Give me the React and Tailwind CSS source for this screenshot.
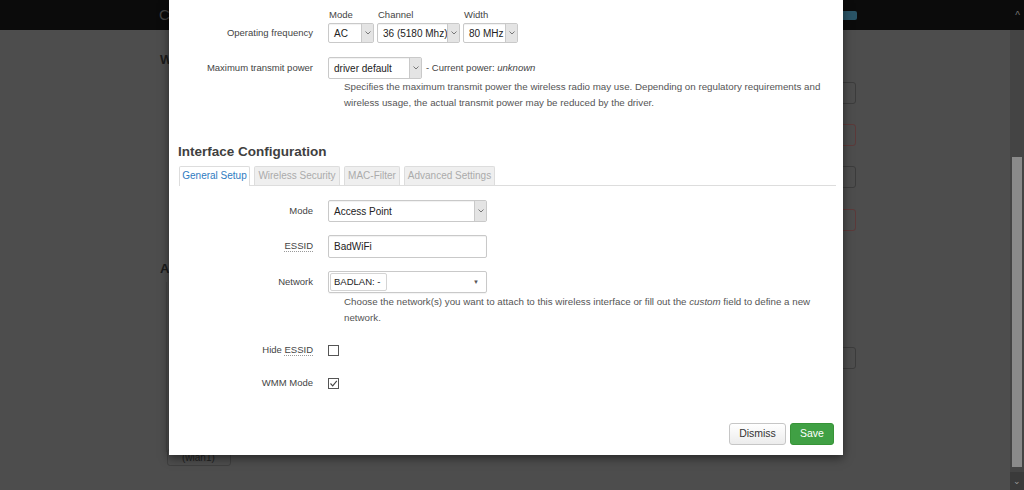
import React from 'react';

const font = "font-['Liberation_Sans',Arial,sans-serif]";

const Chevron = () => (
  <svg width="8" height="6" viewBox="0 0 8 6" fill="none">
    <path d="M1.5 1.5 L4 4 L6.5 1.5" stroke="#777" strokeWidth="1" />
  </svg>
);

// luci-style select: value + grey arrow box on the right
const Select = ({ value, className }) => (
  <div className={`flex border border-[#c9c9c9] rounded-[2px] bg-white shadow-[inset_0_1px_1px_rgba(0,0,0,0.06)] ${className}`}>
    <div className="flex-1 flex items-center pl-[5px] text-[#222] whitespace-nowrap overflow-hidden">{value}</div>
    <div className="w-[12px] flex items-center justify-center bg-[#e4e4e4] border-l border-[#c9c9c9]">
      <Chevron />
    </div>
  </div>
);

const Label = ({ children }) => (
  <div className="w-[144px] mr-[15px] shrink-0 text-right text-[#444]">{children}</div>
);

const Abbr = ({ children }) => (
  <span className="border-b border-dotted border-[#999] leading-[10px] inline-block">{children}</span>
);

const Checkbox = ({ checked }) => (
  <div className="w-[11px] h-[11px] border border-[#555] bg-white flex items-center justify-center">
    {checked && (
      <svg width="9" height="9" viewBox="0 0 9 9" fill="none">
        <path d="M1.5 4.5 L3.7 6.8 L7.8 1.8" stroke="#444" strokeWidth="1.1" />
      </svg>
    )}
  </div>
);

const tabs = [
  { name: 'General Setup', w: 'w-[71px]', active: true },
  { name: 'Wireless Security', w: 'w-[86px]' },
  { name: 'MAC-Filter', w: 'w-[56px]' },
  { name: 'Advanced Settings', w: 'w-[91px]' },
];

export default function App() {
  return (
    <div className={`relative w-[1024px] h-[490px] overflow-hidden bg-[#4d4d4d] text-[9.5px] ${font}`}>
      {/* dimmed page behind the dialog */}
      <div className="h-[30px] bg-[#0b0b0b] flex items-center">
        <span className="ml-[159px] text-[15px] text-[#444]">C</span>
        <span className="ml-[667px] w-[20px] h-[9px] rounded-[2px] bg-[#2a5466]" />
        <span className="ml-auto mr-[4px] text-[10px] text-[#777]">^</span>
      </div>
      <div className="absolute left-[160px] top-[50px] text-[13px] font-bold text-[#1a1a1a]">W</div>
      <div className="absolute left-[160px] top-[259px] text-[13px] font-bold text-[#1a1a1a]">A</div>
      <div className="absolute left-[166px] top-[282px] w-[4px] h-[170px] border-l border-[#454545]" />
      <div className="absolute left-[167px] top-[449px] w-[64px] h-[17px] border border-[#3f3f3f] rounded-[3px] text-[10px] text-[#222] pl-[14px] leading-[15px]">
        (wlan1)
      </div>
      {[82, 124, 166, 209, 347].map((t, i) => (
        <div
          key={t}
          className={`absolute left-[830px] w-[26px] h-[22px] rounded-[3px] border ${i === 1 || i === 3 ? 'border-[#5c3a3a]' : 'border-[#3c3c3c]'}`}
          style={{ top: t }}
        />
      ))}
      {/* scrollbar */}
      <div className="absolute right-0 top-[30px] w-[14px] h-[460px] bg-[#444] flex flex-col items-center">
        <div className="mt-[127px] w-[10px] h-[310px] bg-[#8a8a8a]" />
        <div className="mt-auto h-[18px] w-full bg-[#3a3a3a] text-[9px] text-[#999] text-center leading-[18px]">⌄</div>
      </div>

      {/* dialog */}
      <div className="absolute left-[169px] top-0 w-[674px] h-[455px] bg-white shadow-[0_3px_9px_rgba(0,0,0,0.5)]">
        {/* Operating frequency */}
        <div className="flex items-end mt-[9px]">
          <Label><div className="h-[20px] leading-[20px]">Operating frequency</div></Label>
          <div className="flex gap-[3px]">
            <div>
              <div className="text-[#444] leading-[12px] mb-[2px] pl-[1px]">Mode</div>
              <Select value="AC" className="w-[46px] h-[20px] text-[10px]" />
            </div>
            <div>
              <div className="text-[#444] leading-[12px] mb-[2px] pl-[1px]">Channel</div>
              <Select value="36 (5180 Mhz)" className="w-[83px] h-[20px] text-[10px]" />
            </div>
            <div>
              <div className="text-[#444] leading-[12px] mb-[2px] pl-[1px]">Width</div>
              <Select value="80 MHz" className="w-[55px] h-[20px] text-[10px]" />
            </div>
          </div>
        </div>

        {/* Maximum transmit power */}
        <div className="flex items-center mt-[14px]">
          <Label>Maximum transmit power</Label>
          <Select value="driver default" className="w-[94px] h-[22px] text-[10px]" />
          <span className="ml-[4px] text-[#444]">
            - Current power: <em className="italic">unknown</em>
          </span>
        </div>
        <p className="ml-[175px] mr-[12px] text-[9.75px] text-[#555] leading-[16px]">
          Specifies the maximum transmit power the wireless radio may use. Depending on regulatory requirements and
          wireless usage, the actual transmit power may be reduced by the driver.
        </p>

        <h2 className="ml-[9px] mt-[32px] text-[13.5px] font-bold text-[#404040] leading-[18px]">Interface Configuration</h2>

        {/* tabs */}
        <div className="ml-[10px] mr-[7px] mt-[5px] flex gap-[4px] border-b border-[#ddd]">
          {tabs.map((t) => (
            <div
              key={t.name}
              className={`${t.w} text-center text-[10px] leading-[18px] border border-b-0 border-[#ddd] rounded-t-[2px] ${
                t.active ? 'bg-white text-[#2f7bbf] -mb-px h-[20px]' : 'bg-[#efefef] text-[#ababab] h-[19px]'
              }`}
            >
              {t.name}
            </div>
          ))}
        </div>

        {/* Mode */}
        <div className="flex items-center mt-[14px]">
          <Label>Mode</Label>
          <Select value="Access Point" className="w-[159px] h-[22px] text-[10px]" />
        </div>

        {/* ESSID */}
        <div className="flex items-center mt-[13px]">
          <Label><Abbr>ESSID</Abbr></Label>
          <div className="w-[159px] h-[23px] border border-[#c9c9c9] rounded-[2px] pl-[5px] flex items-center text-[10px] text-[#222] shadow-[inset_0_1px_1px_rgba(0,0,0,0.06)]">
            BadWiFi
          </div>
        </div>

        {/* Network */}
        <div className="flex items-center mt-[13px]">
          <Label>Network</Label>
          <div className="w-[159px] h-[22px] border border-[#c9c9c9] rounded-[2px] flex items-center pl-[1px] pr-[7px] shadow-[0_1px_1px_rgba(0,0,0,0.05)]">
            <div className="w-[57px] h-[18px] border border-[#d4d4d4] rounded-[2px] pl-[3px] leading-[16px] text-[#222] whitespace-nowrap">BADLAN: -</div>
            <span className="ml-auto text-[6px] text-[#555]">▼</span>
          </div>
        </div>
        <p className="ml-[175px] mr-[12px] mt-[1px] text-[9.75px] text-[#555] leading-[16px]">
          Choose the network(s) you want to attach to this wireless interface or fill out the <em className="italic">custom</em> field to define a new
          network.
        </p>

        {/* Hide ESSID */}
        <div className="flex items-center mt-[16px] h-[16px]">
          <Label>Hide <Abbr>ESSID</Abbr></Label>
          <Checkbox />
        </div>

        {/* WMM Mode */}
        <div className="flex items-center mt-[17px] h-[16px]">
          <Label>WMM Mode</Label>
          <Checkbox checked />
        </div>

        {/* footer buttons */}
        <div className="flex justify-end gap-[4px] mr-[9px] mt-[32px]">
          <button className="w-[57px] h-[22px] border border-[#c6c6c6] rounded-[3px] bg-gradient-to-b from-white to-[#ececec] text-[#333] text-[10.5px]">
            Dismiss
          </button>
          <button className="w-[44px] h-[22px] border border-[#379437] rounded-[3px] bg-[#40a044] text-white text-[10.5px]">
            Save
          </button>
        </div>
      </div>
    </div>
  );
}
